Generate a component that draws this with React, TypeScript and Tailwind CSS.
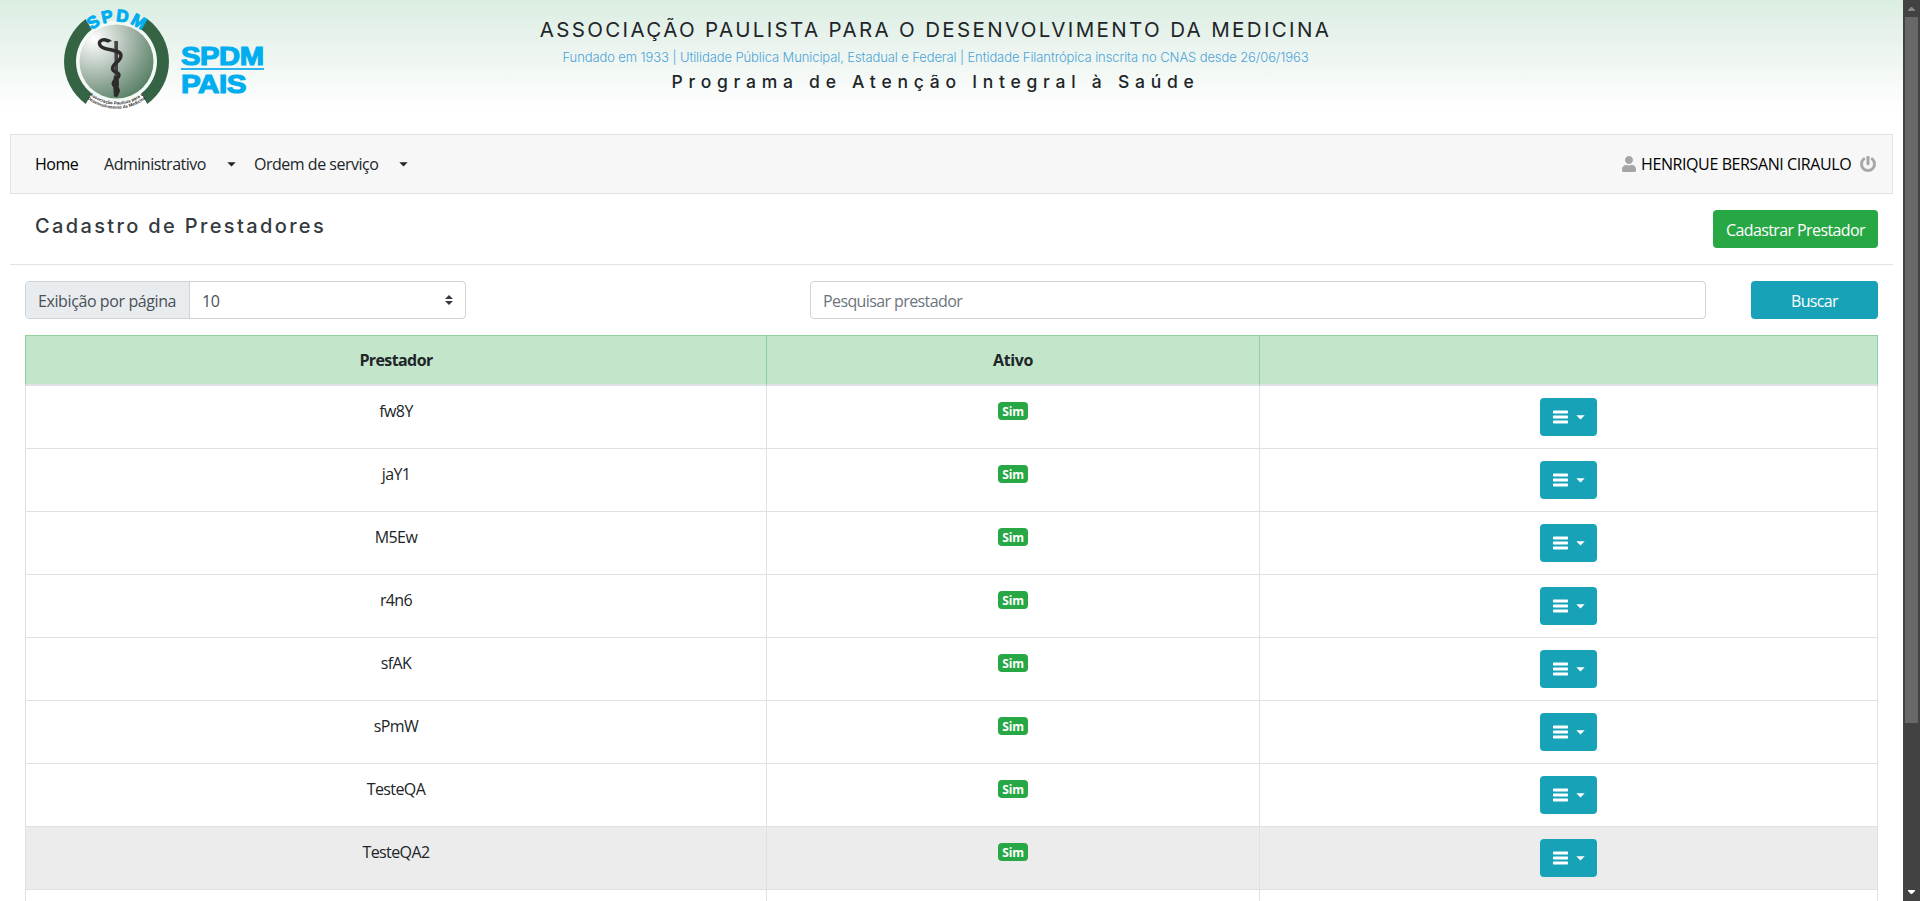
import React from "react";

const providers = ["fw8Y", "jaY1", "M5Ew", "r4n6", "sfAK", "sPmW", "TesteQA", "TesteQA2"];

function Caret({ className = "" }: { className?: string }) {
  return (
    <svg className={className} width="9" height="5" viewBox="0 0 9 5" fill="currentColor" aria-hidden="true">
      <path d="M0.3 0.3H8.7L4.5 4.6Z" />
    </svg>
  );
}

function Logo() {
  return (
    <svg className="ml-[50px] shrink-0" width="230" height="120" viewBox="50 0 230 120" aria-label="SPDM PAIS">
      <defs>
        <radialGradient id="sphere" cx="0.2" cy="0.2" r="0.95">
          <stop offset="0" stopColor="#ffffff" />
          <stop offset="0.3" stopColor="#ccd6cf" />
          <stop offset="0.65" stopColor="#8fa697" />
          <stop offset="1" stopColor="#527d60" />
        </radialGradient>
        <path id="arcTop" d="M76.500 61.5A40 40 0 0 1 156.500 61.5" />
        <path id="arcBottomInner" d="M73.500 61.5A43 43 0 0 0 159.500 61.5" />
        <path id="arcBottomOuter" d="M69.200 61.5A47.300 47.300 0 0 0 163.800 61.5" />
      </defs>
      <circle cx="116.5" cy="61.5" r="41" fill="#f3f9f5" />
      <path d="M91.7 93.5L85.7 104Q116.5 122 147.3 104L141.3 93.5Q116.5 110 91.7 93.5Z" fill="#ffffff" />
      <path
        d="M85.7 19A52.5 52.5 0 0 0 85.7 104L91.7 93.5A40.5 40.5 0 0 1 91.7 29.5ZM147.3 19A52.5 52.5 0 0 1 147.3 104L141.3 93.5A40.5 40.5 0 0 0 141.3 29.5Z"
        fill="#356445"
      />
      <circle cx="116.5" cy="61.5" r="37" fill="url(#sphere)" />
      <path d="M114.3 41H118V72L117 96H114L114.6 72Z" fill="#454343" />
      <path
        d="M108 40.800C103 38.5 98.800 40.500 99.500 44C101 51.5 121 48 121 55.500C121 62 112.500 63 112.500 68.500C112.500 73 119.500 71 119 75.500C118.500 79.500 113 79.500 113.200 84C113.400 87.500 118.500 87 118.200 91L116.5 95"
        fill="none"
        stroke="#2e2b2c"
        strokeWidth="3.4"
        strokeLinecap="round"
      />
      <path d="M113.800 76H118.500L119 84L117.800 96.500H114L113.200 86Z" fill="#2e2b2c" />
      <path d="M103 39.500L109 39L112 41L107 42.5Z" fill="#2e2b2c" />
      <g fontFamily="Liberation Sans, sans-serif" fontWeight="700" fill="#00aeef" stroke="#00aeef">
        <text fontSize="17" strokeWidth="1" textAnchor="middle" textLength="54">
          <textPath href="#arcTop" startOffset="50%">SPDM</textPath>
        </text>
        <text x="181" y="64.5" fontSize="26.5" strokeWidth="1.2" textLength="82.5" lengthAdjust="spacingAndGlyphs">SPDM</text>
        <text x="181" y="92.5" fontSize="26.5" strokeWidth="1.2" textLength="65" lengthAdjust="spacingAndGlyphs">PAIS</text>
      </g>
      <rect x="181" y="68" width="83" height="2" fill="#2bb5ea" />
      <g fontFamily="Liberation Sans, sans-serif" fontWeight="700" fontSize="4.4" fill="#2b2b2b" textAnchor="middle">
        <text textLength="58">
          <textPath href="#arcBottomInner" startOffset="50%">Associação Paulista para o</textPath>
        </text>
        <text textLength="63">
          <textPath href="#arcBottomOuter" startOffset="50%">Desenvolvimento da Medicina</textPath>
        </text>
      </g>
    </svg>
  );
}

function Header() {
  return (
    <header className="grid h-[134px] grid-cols-[280px_1fr_312px] bg-linear-to-b from-[#dbeee2] via-[#e9f3ed] via-30% to-white to-82%">
      <Logo />
      <div className="flex flex-col items-center whitespace-nowrap pt-[18px] font-[Inter,sans-serif] text-[#212529]">
        <h1 className="h-[27px] text-[20.500px] leading-6 tracking-[2.350px]">
          ASSOCIAÇÃO PAULISTA PARA O DESENVOLVIMENTO DA MEDICINA
        </h1>
        <p className="h-[24px] text-[13px] leading-6 font-light tracking-[-0.100px] text-[#4da3d8]">
          Fundado em 1933 | Utilidade Pública Municipal, Estadual e Federal | Entidade Filantrópica inscrita no CNAS desde 26/06/1963
        </p>
        <h2 className="pt-px text-[17.500px] leading-6 font-medium tracking-[5.750px]">Programa de Atenção Integral à Saúde</h2>
      </div>
    </header>
  );
}

function NavBar() {
  return (
    <nav className="mx-[10px] flex h-[60px] items-center justify-between border border-[#e1e3e5] bg-[#f7f7f7] pr-4 pl-6">
      <div className="flex items-center tracking-[-0.480px] text-[#212529]">
        <a className="w-[69px] text-black">Home</a>
        <a className="w-[123px]">Administrativo</a>
        <Caret className="mr-[18px]" />
        <a className="w-[145px]">Ordem de serviço</a>
        <Caret />
      </div>
      <div className="flex items-center text-black">
        <svg className="mr-[5px] text-[#a5a5a5]" width="14" height="16" viewBox="0 0 448 512" fill="currentColor">
          <path d="M224 256c70.700 0 128-57.300 128-128S294.700 0 224 0 96 57.300 96 128s57.300 128 128 128zm89.600 32h-16.700c-22.200 10.200-46.900 16-72.900 16s-50.600-5.800-72.900-16h-16.700C60.200 288 0 348.200 0 422.400V464c0 26.500 21.500 48 48 48h352c26.500 0 48-21.500 48-48v-41.600c0-74.200-60.200-134.400-134.400-134.400z" />
        </svg>
        <span className="w-[219px]">HENRIQUE BERSANI CIRAULO</span>
        <svg className="text-[#a5a5a5]" width="16" height="16" viewBox="0 0 512 512" fill="currentColor">
          <path stroke="currentColor" strokeWidth="14" d="M400 54.100c63 45 104 118.600 104 201.900 0 136.800-110.800 247.700-247.500 248C120 504.300 8.200 393 8 256.400 7.900 173.100 48.900 99.300 111.800 54.200c11.700-8.300 28-4.800 35 7.700L162.600 90c5.900 10.500 3.100 23.800-6.600 31-41.500 30.800-68 79.600-68 134.900-.1 92.300 74.500 168.100 168 168.100 91.600 0 168.600-74.200 168-169.100-.3-51.800-24.700-101.800-68.100-134-9.700-7.200-12.400-20.500-6.500-30.900l15.800-28.100c7-12.400 23.200-16.100 34.800-7.800zM296 264V24c0-13.300-10.700-24-24-24h-32c-13.300 0-24 10.700-24 24v240c0 13.300 10.700 24 24 24h32c13.300 0 24-10.700 24-24z" />
        </svg>
      </div>
    </nav>
  );
}

function Filters() {
  return (
    <div className="flex h-[38px]">
      <div className="flex w-[441px] rounded border border-[#ced4da] text-[#495057]">
        <div className="flex w-[164px] items-center rounded-l-[3px] border-r border-[#ced4da] bg-[#e9ecef] pt-px pl-3">Exibição por página</div>
        <div className="flex flex-1 items-center justify-between pr-3 pl-3">
          <span className="pt-px">10</span>
          <svg width="8" height="10" viewBox="0 0 4 5" fill="#343a40">
            <path d="M2 0L0 2h4zm0 5L0 3h4z" />
          </svg>
        </div>
      </div>
      <div className="ml-[344px] flex w-[896px] items-center rounded border border-[#ced4da] pt-px pl-3 tracking-[-0.600px] text-[#6c757d]">
        Pesquisar prestador
      </div>
      <button className="ml-[45px] w-[127px] rounded bg-[#17a2b8] pt-px tracking-[-0.650px] text-white">Buscar</button>
    </div>
  );
}

function ProviderTable() {
  return (
    <div className="mt-4 border-x border-[#dee2e6] text-center text-[#212529]">
      <div className="-mx-px grid h-[51px] grid-cols-[741px_493px_619px] border border-b-2 border-[#8fd19e] border-b-[#dee2e6] bg-[#c3e6cb] leading-[49px] font-bold tracking-[-0.600px]">
        <div className="border-r border-[#8fd19e]">Prestador</div>
        <div className="border-r border-[#8fd19e] tracking-[-0.400px]">Ativo</div>
        <div />
      </div>
      {providers.map((name) => (
        <div
          key={name}
          className={
            name === "TesteQA2"
              ? "grid h-[63px] grid-cols-[741px_493px_617px] border-b border-[#dee2e6] bg-[#ececec]"
              : "grid h-[63px] grid-cols-[741px_493px_617px] border-b border-[#dee2e6]"
          }
        >
          <div className="border-r border-[#dee2e6] pt-[13px] tracking-[-0.600px]">{name}</div>
          <div className="border-r border-[#dee2e6] pt-4">
            <span className="mx-auto block h-[18px] w-[30px] rounded bg-[#28a745] text-[12px] leading-[19px] font-bold tracking-[-0.200px] text-white">
              Sim
            </span>
          </div>
          <div className="flex justify-center pt-3">
            <button className="flex h-[38px] w-[57px] items-center rounded bg-[#17a2b8] pl-[13px] text-white">
              <svg width="15" height="14" viewBox="0 0 15 14" fill="currentColor">
                <rect y="0.5" width="15" height="3" rx="0.7" />
                <rect y="5.5" width="15" height="3" rx="0.7" />
                <rect y="10.5" width="15" height="3" rx="0.7" />
              </svg>
              <Caret className="ml-2" />
            </button>
          </div>
        </div>
      ))}
      <div className="grid h-[63px] grid-cols-[741px_493px_617px]">
        <div className="border-r border-[#dee2e6]" />
        <div className="border-r border-[#dee2e6]" />
        <div />
      </div>
    </div>
  );
}

function ScrollBar() {
  return (
    <div className="flex w-[17px] flex-col items-center justify-between bg-[#424242]">
      <div className="flex flex-col items-center">
        <svg className="h-[17px]" width="7" height="17" viewBox="0 0 7 17" fill="#868686">
          <path d="M0 11V10L3 7H4L7 10V11Z" />
        </svg>
        <div className="h-[706px] w-[13px] bg-[#686868]" />
      </div>
      <svg width="7" height="17" viewBox="0 0 7 17" fill="#ffffff">
        <path d="M0 6V7L3 10H4L7 7V6Z" />
      </svg>
    </div>
  );
}

export default function App() {
  return (
    <div className="flex h-[901px] w-[1920px] overflow-hidden bg-white font-['Open_Sans',sans-serif] text-[16px] leading-6 tracking-[-0.400px] whitespace-nowrap">
      <div className="w-[1903px] shrink-0">
        <Header />
        <NavBar />
        <div className="mx-[10px] flex h-[71px] justify-between border-b border-[#e1e3e5] pt-4 pr-[15px] pl-[25px]">
          <h2 className="font-[Inter,sans-serif] text-[20px] leading-[32px] font-medium tracking-[2.360px] text-[#343a40]">Cadastro de Prestadores</h2>
          <button className="h-[38px] w-[165px] rounded bg-[#28a745] pt-px tracking-[-0.600px] text-white">Cadastrar Prestador</button>
        </div>
        <main className="px-[25px] pt-4">
          <Filters />
          <ProviderTable />
        </main>
      </div>
      <ScrollBar />
    </div>
  );
}
